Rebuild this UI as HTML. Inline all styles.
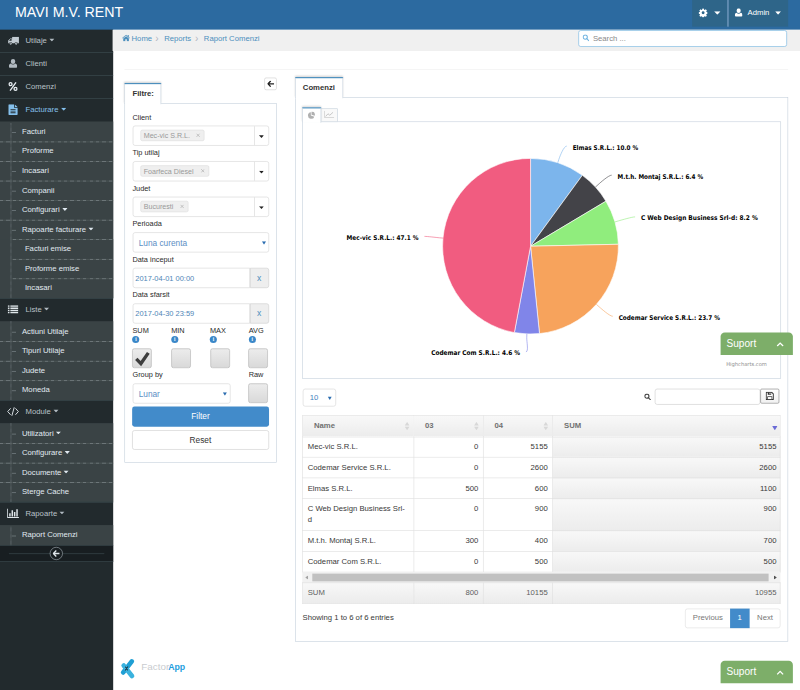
<!DOCTYPE html>
<html lang="ro">
<head>
<meta charset="utf-8">
<title>MAVI M.V. RENT - Raport Comenzi</title>
<style>
*{box-sizing:border-box;margin:0;padding:0}
html,body{width:800px;height:690px;overflow:hidden;background:#fff}
body{font-family:"Liberation Sans",Arial,sans-serif;font-size:13px;color:#393939;line-height:1.5}
#page{position:absolute;left:0;top:0;width:1350px;height:1165px;transform:scale(0.592593);transform-origin:0 0;background:#fff;overflow:hidden}
.abs{position:absolute}
svg{display:block}
/* navbar */
#navbar{position:absolute;left:0;top:0;width:1350px;height:50px;background:#2c6aa0;z-index:5}
#brand{position:absolute;left:25.3px;top:5px;font-size:24px;line-height:30px;color:#fff;white-space:nowrap}
.navbtn{position:absolute;top:0;height:45px;background:#2e6589;color:#fff}
/* sidebar */
#sidebar{position:absolute;left:0;top:48px;padding-top:2px;width:190.5px;height:1118px;background:#222a2d}
#sidebar ul{list-style:none}
.nl>li{border-top:1px solid #3f4e54;position:relative}
.nl>li:first-child{border-top:0}
.nl>li>a{display:block;height:38px;line-height:35px;color:#bac2c8;font-size:13px;position:relative;padding-left:43px;white-space:nowrap}
.nl>li>a .mi{position:absolute;left:7px;top:-1.5px;width:30px;height:38px}

.nl>li.open>a{color:#85c0ec}
.sub{background:#3a4345;position:relative}
.sub>li{position:relative}
.sub>li>a{display:block;height:33px;line-height:30.5px;border-top:1px solid transparent;background:repeating-linear-gradient(90deg,#8e989b 0,#8e989b 1px,#56605f 1px,#56605f 2px) 0 0/100% 1px no-repeat border-box;color:#e1eaf1;padding-left:37px;white-space:nowrap;position:relative}
.sub>li:first-child>a{border-top:0;height:34px;line-height:33px;background:none}
.sub>li>a:before{content:"";position:absolute;left:20px;top:16px;width:7px;border-top:1px solid #858f93}
.sub>li:first-child>a:before{top:18px}
.sub:before{content:"";position:absolute;left:18px;top:0;bottom:0;border-left:1px dotted #9aa4a8;z-index:2}
.sub .sub{border-top:0;background:#3a4345}
.sub .sub:before{display:none}
.sub .sub>li>a,.sub .sub>li:first-child>a{border-top:1px solid transparent;background:repeating-linear-gradient(90deg,#8e989b 0,#8e989b 1px,#56605f 1px,#56605f 2px) 0 0/100% 1px no-repeat border-box;height:33px;line-height:30.5px;margin-left:20px}
.sub .sub>li>a{padding-left:22px}
.sub .sub>li>a:before{display:none}
.caret{display:inline-block;vertical-align:middle;margin-left:4px;position:relative;top:-1px}
#toggle{height:28px;background:#181e21;border-top:1px solid #3f4e54;border-bottom:1px solid #3f4e54;position:relative}
#toggle:before{content:"";position:absolute;left:15px;right:15px;top:12.5px;border-top:1px solid #3f4e54}
#toggle .circ{position:absolute;left:84px;top:2px;width:22px;height:22px;border-radius:50%;border:1px solid #aab4bb;background:#181e21}
/* breadcrumbs */
#crumbs{position:absolute;left:190px;top:50px;width:1160px;height:36px;background:#f0f0f0}
#crumbs .bc{position:absolute;left:0;top:-0.5px;line-height:30px;font-size:13px;color:#4c8fbd;white-space:nowrap}
#crumbs .bc span{position:absolute;top:0}
#search{position:absolute;left:785.5px;top:0.5px;width:352px;height:28px;border:1px solid #6fb3e0;border-radius:4px;background:#fff;font-size:13px;color:#8a8a8a;line-height:26px;padding-left:24px}
/* generic */
.lbl{position:absolute;font-size:12.4px;color:#2a2a2a;margin-top:1.5px;line-height:18px;white-space:nowrap}
.box{position:absolute;border:1px solid #d5d5d5;background:#fff;border-radius:4px}
.tabpanel{position:absolute;border:1px solid #c5d0dc;background:#fff}
.tab{position:absolute;border:1px solid #c5d0dc;border-top:2px solid #4c8fbd;border-bottom:0;background:#fff;font-weight:bold;color:#333;font-size:13px;line-height:18px;white-space:nowrap;box-shadow:0 -2px 3px 0 rgba(0,0,0,.15)}
.blue{color:#4c8fbd}
.chk{position:absolute;width:33px;height:33px;border:1px solid #a8a8a8;border-radius:3.5px;background:linear-gradient(#ececec,#d9d9d9)}
.info{position:absolute;width:12px;height:12px;border-radius:50%;background:#3a87c8}
.info{text-align:center;color:#fff;font:bold 8.5px/12px "Liberation Serif",serif}
/* table */
.tbl{position:absolute;border-collapse:collapse;font-size:13px;color:#393939;table-layout:fixed}
.tbl th,.tbl td{border:1px solid #ddd;padding:7.5px 8px 0;line-height:18.5px;vertical-align:top}
.tbl td:last-child{padding-right:6px}
.tbl th{height:36px;padding-top:7.5px;background:linear-gradient(#f8f8f8,#ececec);color:#707070;font-weight:bold;text-align:left;padding-left:18.5px;position:relative}
.tbl td.n{text-align:right}
.tbl td.s{text-align:right;background:linear-gradient(#f8f8f8,#ececec)}
.tbl th .so{position:absolute;right:7px;top:10.5px}
.tbl.ft td{background:linear-gradient(#f8f8f8,#ececec);color:#5f5f5f}
.sup{position:absolute;left:1216px;width:122px;height:38px;background:#7dae69;border-radius:7px 7px 0 0;color:#fff;font-size:17px;line-height:37px;padding-left:10px;white-space:nowrap}
</style>
</head>
<body>
<div id="page">
<div id="navbar">
  <div id="brand">MAVI M.V. RENT</div>
  <div class="navbtn" style="left:1168px;width:59px">
    <svg class="abs" style="left:10.5px;top:14px" width="15" height="15" viewBox="0 0 16 16"><path fill="#fff" fill-rule="evenodd" d="M6.6 0.4h2.8l.4 2.1 1.2.5 1.8-1.2 2 2-1.2 1.8.5 1.2 2.1.4v2.8l-2.1.4-.5 1.2 1.2 1.8-2 2-1.8-1.2-1.2.5-.4 2.1H6.6l-.4-2.1-1.2-.5-1.8 1.2-2-2 1.200-1.8-.5-1.2-2.100-.4V7.200l2.100-.4.5-1.2-1.200-1.8 2-2 1.800 1.200 1.200-.5zM8 5.400a2.600 2.600 0 1 0 0 5.200a2.600 2.600 0 0 0 0-5.200z"/></svg>
    <svg class="abs" style="left:37px;top:19px" width="11" height="6" viewBox="0 0 11 6"><path d="M0 0h11L5.500 6z" fill="#fff"/></svg>
  </div>
  <div class="abs" style="left:1227.7px;top:0;width:1px;height:45px;background:#ddd"></div>
  <div class="navbtn" style="left:1229.500px;width:100.500px">
    <svg class="abs" style="left:10.5px;top:13.5px" width="13" height="14.5" viewBox="0 0 13 14" preserveAspectRatio="none"><path fill="#fff" d="M6.500 0a3.400 3.400 0 0 1 3.400 3.400v1a3.400 3.400 0 0 1-6.800 0v-1A3.400 3.400 0 0 1 6.500 0zM2.800 7.300c1 .9 2.300 1.400 3.700 1.400s2.700-.5 3.700-1.400c1.900.5 2.800 2.200 2.800 4.500 0 1.300-.9 2.200-2.100 2.200H2.100C.9 14 0 13.100 0 11.800c0-2.300.9-4 2.800-4.500z"/></svg>
    <span class="abs" style="left:32px;top:11px;line-height:20px;font-size:13px">Admin</span>
    <svg class="abs" style="left:78px;top:19px" width="10" height="6" viewBox="0 0 10 6"><path d="M0 0h10L5 6z" fill="#fff"/></svg>
  </div>
</div>
<div id="sidebar">
<ul class="nl">
  <li class="first"><a><span class="mi"><svg class="abs" style="left:6px;top:13px" width="19" height="14" viewBox="0 0 19 14"><path fill="#c3ccd3" d="M7.5 0H19v10.900H7.500zM7.500 2.800H4.300L0.800 6.300v4.600h6.700z"/><path fill="#222a2d" d="M4.700 4h1.800v2.700H2.100z"/><circle cx="5" cy="11.500" r="2.700" fill="#222a2d"/><circle cx="14.300" cy="11.500" r="2.700" fill="#222a2d"/><circle cx="5" cy="11.500" r="1.900" fill="#c3ccd3"/><circle cx="14.300" cy="11.500" r="1.900" fill="#c3ccd3"/><circle cx="5" cy="11.500" r="0.700" fill="#222a2d"/><circle cx="14.300" cy="11.500" r="0.700" fill="#222a2d"/></svg></span>Utilaje<svg class="caret" width="9" height="5" viewBox="0 0 9 5"><path d="M0 0h9L4.500 5z" fill="#b1bac1"/></svg></a></li>
  <li><a><span class="mi"><svg class="abs" style="left:8px;top:11px" width="14" height="16" viewBox="0 0 13 14"><path fill="#b1bac1" d="M6.500 0a3.400 3.400 0 0 1 3.400 3.400v1a3.400 3.400 0 0 1-6.800 0v-1A3.400 3.400 0 0 1 6.500 0zM2.800 7.300c1 .9 2.300 1.400 3.700 1.400s2.700-.5 3.700-1.400c1.900.5 2.800 2.200 2.800 4.500 0 1.300-.9 2.200-2.100 2.200H2.100C.9 14 0 13.100 0 11.800c0-2.300.9-4 2.800-4.500z"/></svg></span>Clienti</a></li>
  <li><a><span class="mi"><svg class="abs" style="left:7px;top:11px" width="16" height="16" viewBox="0 0 16 16"><g fill="none" stroke="#e8eef2" stroke-width="2.300"><circle cx="3.800" cy="4" r="2.500"/><circle cx="12.200" cy="12" r="2.500"/><path d="M13 1L3 15"/></g></svg></span>Comenzi</a></li>
  <li class="open"><a><span class="mi"><svg class="abs" style="left:7px;top:10px" width="16" height="18" viewBox="0 0 15 18" preserveAspectRatio="none"><path fill="#85c0ec" fill-rule="evenodd" d="M1 0h8v5c0 .6.400 1 1 1h5v11c0 .600-.4 1-1 1H1c-.6 0-1-.4-1-1V1c0-.6.400-1 1-1zM10.300 0.200L14.800 4.700H10.300zM3.500 8v1.300h8V8zM3.500 10.800v1.300h8v-1.300zM3.500 13.600v1.300h8v-1.300z"/></svg></span>Facturare<svg class="caret" width="9" height="5" viewBox="0 0 9 5"><path d="M0 0h9L4.500 5z" fill="#85c0ec"/></svg></a>
    <ul class="sub">
      <li><a>Facturi</a></li>
      <li><a>Proforme</a></li>
      <li><a>Incasari</a></li>
      <li><a>Companii</a></li>
      <li><a>Configurari<svg class="caret" width="9" height="5" viewBox="0 0 9 5"><path d="M0 0h9L4.500 5z" fill="#e1eaf1"/></svg></a></li>
      <li><a>Rapoarte facturare<svg class="caret" width="9" height="5" viewBox="0 0 9 5"><path d="M0 0h9L4.500 5z" fill="#e1eaf1"/></svg></a>
        <ul class="sub">
          <li><a>Facturi emise</a></li>
          <li><a>Proforme emise</a></li>
          <li><a>Incasari</a></li>
        </ul>
      </li>
    </ul>
  </li>
  <li><a><span class="mi"><svg class="abs" style="left:6px;top:12px" width="18" height="14" viewBox="0 0 18 14"><path fill="#dfe6ea" d="M0 0h3v2.500H0zM4.500 0H18v2.500H4.500zM0 3.800h3v2.500H0zM4.500 3.800H18v2.500H4.500zM0 7.600h3v2.500H0zM4.500 7.600H18v2.500H4.500zM0 11.400h3v2.500H0zM4.500 11.400H18v2.500H4.500z"/></svg></span>Liste<svg class="caret" width="9" height="5" viewBox="0 0 9 5"><path d="M0 0h9L4.500 5z" fill="#b1bac1"/></svg></a>
    <ul class="sub">
      <li><a>Actiuni Utilaje</a></li>
      <li><a>Tipuri Utilaje</a></li>
      <li><a>Judete</a></li>
      <li><a>Moneda</a></li>
    </ul>
  </li>
  <li><a><span class="mi"><svg class="abs" style="left:5px;top:12px" width="20" height="15" viewBox="0 0 20 15"><g fill="none" stroke="#dfe6ea" stroke-width="1.600" stroke-linecap="round" stroke-linejoin="round"><path d="M5.500 2.500L1 7.500l4.500 5M14.500 2.500l4.500 5-4.500 5M11.800 1L8.200 14"/></g></svg></span>Module<svg class="caret" width="9" height="5" viewBox="0 0 9 5"><path d="M0 0h9L4.500 5z" fill="#b1bac1"/></svg></a>
    <ul class="sub">
      <li><a>Utilizatori<svg class="caret" width="9" height="5" viewBox="0 0 9 5"><path d="M0 0h9L4.500 5z" fill="#e1eaf1"/></svg></a></li>
      <li><a>Configurare<svg class="caret" width="9" height="5" viewBox="0 0 9 5"><path d="M0 0h9L4.500 5z" fill="#e1eaf1"/></svg></a></li>
      <li><a>Documente<svg class="caret" width="9" height="5" viewBox="0 0 9 5"><path d="M0 0h9L4.500 5z" fill="#e1eaf1"/></svg></a></li>
      <li><a>Sterge Cache</a></li>
    </ul>
  </li>
  <li><a><span class="mi"><svg class="abs" style="left:5px;top:11px" width="20" height="16" viewBox="0 0 20 16"><path fill="#dfe6ea" d="M0 0h1.500v14.500H20V16H0zM3.500 8h2.500v5.500H3.500zM7.500 3h2.500v10.500H7.500zM11.500 6h2.500v7.500h-2.500zM15.500 1.500H18v12h-2.500z"/></svg></span>Rapoarte<svg class="caret" width="9" height="5" viewBox="0 0 9 5"><path d="M0 0h9L4.500 5z" fill="#b1bac1"/></svg></a>
    <ul class="sub">
      <li><a>Raport Comenzi</a></li>
    </ul>
  </li>
</ul>
<div id="toggle"><div class="circ"><svg class="abs" style="left:4px;top:4px" width="12" height="12" viewBox="0 0 12 12"><path d="M6 1L1 6l5 5M1.500 6H11.500" fill="none" stroke="#dfe6ea" stroke-width="2.200"/></svg></div></div>
</div>
<div id="crumbs">
  <div class="bc">
    <svg class="abs" style="left:15.5px;top:8.5px" width="13.5" height="11.5" viewBox="0 0 14 12"><path fill="#4c8fbd" d="M7 0.500L0 6.300l.8.900L7 2.100l6.200 5.100.8-.9-2.300-1.900V1.200H10v1.800zM2 7.200V12h3.700V8.500h2.600V12H12V7.200L7 3.100z"/></svg>
    <span style="left:32px">Home</span>
    <span style="left:72px;color:#b2b6bf;font-size:17px;top:1.5px">&#8250;</span>
    <span style="left:87px">Reports</span>
    <span style="left:139px;color:#b2b6bf;font-size:17px;top:1.5px">&#8250;</span>
    <span style="left:154px">Raport Comenzi</span>
  </div>
  <div id="search">Search ...
    <svg class="abs" style="left:6px;top:6.5px" width="11.5" height="11.5" viewBox="0 0 12 12"><g fill="none" stroke="#6fb3e0" stroke-width="1.800"><circle cx="4.800" cy="4.800" r="3.700"/><path d="M7.500 7.500L11.300 11.300" stroke-linecap="round"/></g></svg>
  </div>
</div>
<div class="abs" style="left:210px;top:116.5px;width:1120px;border-top:1px solid #eeeeee"></div>
<div class="abs" style="left:446px;top:130.500px;width:21px;height:21px;border:1px solid #ccc;border-radius:3px;background:#fff"><svg class="abs" style="left:4px;top:4px" width="12" height="11" viewBox="0 0 12 11"><path d="M5.800 0.800L1.300 5.500l4.500 4.700M1.500 5.500H11.500" fill="none" stroke="#222" stroke-width="2.300"/></svg></div>
<div class="tabpanel" style="left:210px;top:174px;width:257px;height:607px"></div>
<div class="tab" style="left:210px;top:140px;width:62px;height:36px;padding:6.5px 0 0 12.5px">Filtre:</div>
<div class="lbl" style="left:223.5px;top:187.5px;line-height:19.500px">Client</div>
<div class="box" style="left:224px;top:212px;width:229.500px;height:34px"><div class="abs" style="left:11.5px;top:5.5px;height:19px;width:108.5px;border:1px solid #dcdcdc;border-radius:3px;background:#efefef;color:#999;font-size:12px;line-height:18px;padding-left:5px;white-space:nowrap">Mec-vic S.R.L.<svg class="abs" style="right:6.5px;top:5.5px" width="6.5" height="6.5" viewBox="0 0 7 7"><path d="M0.500 0.500l6 6M6.500 0.500l-6 6" stroke="#b0b0b0" stroke-width="1.300" fill="none"/></svg></div><div class="abs" style="left:203.5px;top:0;width:1px;height:32px;background:#d5d5d5"></div><svg class="abs" style="left:211.5px;top:14.5px" width="8.5" height="5" viewBox="0 0 9 5"><path d="M0 0h9L4.500 5z" fill="#222"/></svg></div>
<div class="lbl" style="left:223.5px;top:247.5px;line-height:19.500px">Tip utilaj</div>
<div class="box" style="left:224px;top:272px;width:229.500px;height:34px"><div class="abs" style="left:11.5px;top:5.5px;height:19px;width:116px;border:1px solid #dcdcdc;border-radius:3px;background:#efefef;color:#999;font-size:12px;line-height:18px;padding-left:5px;white-space:nowrap">Foarfeca Diesel<svg class="abs" style="right:6.5px;top:5.5px" width="6.5" height="6.5" viewBox="0 0 7 7"><path d="M0.500 0.500l6 6M6.500 0.500l-6 6" stroke="#b0b0b0" stroke-width="1.300" fill="none"/></svg></div><div class="abs" style="left:203.5px;top:0;width:1px;height:32px;background:#d5d5d5"></div><svg class="abs" style="left:211.5px;top:14.5px" width="8.5" height="5" viewBox="0 0 9 5"><path d="M0 0h9L4.500 5z" fill="#222"/></svg></div>
<div class="lbl" style="left:223.5px;top:307.5px;line-height:19.500px">Judet</div>
<div class="box" style="left:224px;top:332px;width:229.500px;height:34px"><div class="abs" style="left:11.5px;top:5.5px;height:19px;width:81.5px;border:1px solid #dcdcdc;border-radius:3px;background:#efefef;color:#999;font-size:12px;line-height:18px;padding-left:5px;white-space:nowrap">Bucuresti<svg class="abs" style="right:6.5px;top:5.5px" width="6.5" height="6.5" viewBox="0 0 7 7"><path d="M0.500 0.500l6 6M6.500 0.500l-6 6" stroke="#b0b0b0" stroke-width="1.300" fill="none"/></svg></div><div class="abs" style="left:203.5px;top:0;width:1px;height:32px;background:#d5d5d5"></div><svg class="abs" style="left:211.5px;top:14.5px" width="8.5" height="5" viewBox="0 0 9 5"><path d="M0 0h9L4.500 5z" fill="#222"/></svg></div>
<div class="lbl" style="left:223.5px;top:367.5px;line-height:19.500px">Perioada</div>
<div class="box" style="left:224px;top:392px;width:229.500px;height:34px;font-size:14px;line-height:34px;padding-left:9px;color:#5b8ec4">Luna curenta<svg class="abs" style="left:217px;top:14px" width="7" height="6" viewBox="0 0 7 6"><path d="M0 0h7L3.500 6z" fill="#2b6db0"/></svg></div>
<div class="lbl" style="left:223.5px;top:427.5px;line-height:19.500px">Data inceput</div>
<div class="box" style="left:224px;top:452px;width:198px;height:34px;border-radius:4px 0 0 4px;font-size:12.6px;line-height:34.5px;padding-left:3.3px;color:#4f86b7">2017-04-01 00:00</div>
<div class="box" style="left:421.5px;top:452px;width:32px;height:34px;border-radius:0 4px 4px 0;background:#eee;border-color:#ccc;font-size:14.5px;line-height:33px;text-align:center;color:#4c8fbd">x</div>
<div class="lbl" style="left:223.5px;top:487.5px;line-height:19.500px">Data sfarsit</div>
<div class="box" style="left:224px;top:512px;width:198px;height:34px;border-radius:4px 0 0 4px;font-size:12.6px;line-height:34.5px;padding-left:3.3px;color:#4f86b7">2017-04-30 23:59</div>
<div class="box" style="left:421.5px;top:512px;width:32px;height:34px;border-radius:0 4px 4px 0;background:#eee;border-color:#ccc;font-size:14.5px;line-height:33px;text-align:center;color:#4c8fbd">x</div>
<div class="lbl" style="left:223.5px;top:547.5px;line-height:19.500px">SUM</div>
<div class="info" style="left:223.3px;top:566.5px">i</div>
<div class="chk" style="left:223px;top:587.5px"><svg class="abs" style="left:0;top:0" width="33" height="33" viewBox="0 0 33 33"><path d="M6 16.5l7.800 8L26.300 6.500" fill="none" stroke="#3d3d3d" stroke-width="5.600"/></svg></div>
<div class="lbl" style="left:288.9px;top:547.5px;line-height:19.500px">MIN</div>
<div class="info" style="left:288.7px;top:566.5px">i</div>
<div class="chk" style="left:289px;top:587.5px"></div>
<div class="lbl" style="left:354.3px;top:547.5px;line-height:19.500px">MAX</div>
<div class="info" style="left:354.1px;top:566.5px">i</div>
<div class="chk" style="left:354.6px;top:587.5px"></div>
<div class="lbl" style="left:419.7px;top:547.5px;line-height:19.500px">AVG</div>
<div class="info" style="left:419.5px;top:566.5px">i</div>
<div class="chk" style="left:419.1px;top:587.5px"></div>
<div class="lbl" style="left:223.5px;top:622.5px;line-height:19.500px">Group by</div>
<div class="box" style="left:224px;top:647px;width:165px;height:34px;font-size:14px;line-height:34px;padding-left:9px;color:#5b8ec4">Lunar<svg class="abs" style="left:151px;top:14px" width="7" height="6" viewBox="0 0 7 6"><path d="M0 0h7L3.500 6z" fill="#2b6db0"/></svg></div>
<div class="lbl" style="left:419.7px;top:622.5px;line-height:19.500px">Raw</div>
<div class="chk" style="left:419.200px;top:647px"></div>
<div class="abs" style="left:223px;top:685.5px;width:230.5px;height:34px;border-radius:4px;background:#428bca;color:#fff;font-size:14px;line-height:33px;text-align:center">Filter</div>
<div class="abs" style="left:223px;top:725.5px;width:230.5px;height:33.5px;border-radius:4px;background:#fff;border:1px solid #ccc;color:#333;font-size:14px;line-height:31px;text-align:center">Reset</div>
<div class="tabpanel" style="left:497.5px;top:164px;width:832px;height:918.7px"></div>
<div class="tab" style="left:497.5px;top:130px;width:81px;height:36px;padding:7px 0 0 12.5px">Comenzi</div>
<div class="tabpanel" style="left:510px;top:204.5px;width:807.5px;height:434.5px"></div>
<div class="abs" style="left:540.5px;top:182.5px;width:29.5px;height:23px;border:1px solid #c5d0dc;background:#f9f9f9"><svg class="abs" style="left:5px;top:3.5px" width="17" height="12" viewBox="0 0 17 12"><path d="M0.5 0v11.5H17" fill="none" stroke="#c4c4c4" stroke-width="1.2"/><path d="M2.5 9.5l4-4.5 3 2.5L15 2.5" fill="none" stroke="#c4c4c4" stroke-width="1.6"/></svg></div>
<div class="abs" style="left:510px;top:181px;width:31.5px;height:26px;border:1px solid #c5d0dc;border-top:2px solid #4c8fbd;border-bottom:0;background:#fff;box-shadow:0 -2px 3px 0 rgba(0,0,0,.15)"><svg class="abs" style="left:7.5px;top:4.5px" width="13" height="13" viewBox="0 0 14 14"><path d="M6 1.5A6 6 0 1 0 12.3 9.5L6 7.5z" fill="#b0b0b0"/><path d="M7.2 0a6.2 6.2 0 0 1 6.2 6.2l-.3 1.900-5.900-1.900z" fill="#b0b0b0"/></svg></div>
<svg class="abs" style="left:0;top:0" width="1350" height="700" viewBox="0 0 1350 700">
<path d="M895.3 415.5L895.3 267.3A148.2 148.2 0 0 1 982.7 295.8Z" fill="#7cb5ec" stroke="#fff" stroke-width="1" stroke-linejoin="round"/>
<path d="M956.4 246.5C951.4 246.5 945.0 263.2 943.1 268.9L941.3 274.6" fill="none" stroke="#7cb5ec" stroke-width="1"/>
<path d="M895.3 415.5L982.7 295.8A148.2 148.2 0 0 1 1022.5 339.5Z" fill="#434348" stroke="#fff" stroke-width="1" stroke-linejoin="round"/>
<path d="M1032.2 295.6C1027.2 295.6 1013.7 307.6 1009.3 311.6L1004.8 315.7" fill="none" stroke="#434348" stroke-width="1"/>
<path d="M895.3 415.5L1022.5 339.5A148.2 148.2 0 0 1 1043.5 412.2Z" fill="#90ed7d" stroke="#fff" stroke-width="1" stroke-linejoin="round"/>
<path d="M1071.7 366.0C1066.7 366.0 1049.2 371.2 1043.5 372.8L1037.7 374.5" fill="none" stroke="#90ed7d" stroke-width="1"/>
<path d="M895.3 415.5L1043.5 412.2A148.2 148.2 0 0 1 910.4 562.9Z" fill="#f7a35c" stroke="#fff" stroke-width="1" stroke-linejoin="round"/>
<path d="M1034.0 533.7C1029.0 533.7 1015.4 521.5 1010.9 517.6L1006.4 513.6" fill="none" stroke="#f7a35c" stroke-width="1"/>
<path d="M895.3 415.5L910.4 562.9A148.2 148.2 0 0 1 868.0 561.2Z" fill="#8085e9" stroke="#fff" stroke-width="1" stroke-linejoin="round"/>
<path d="M887.5 593.7C892.5 593.7 888.6 575.6 888.9 569.6L889.1 563.6" fill="none" stroke="#8085e9" stroke-width="1"/>
<path d="M895.3 415.5L868.0 561.2A148.2 148.2 0 0 1 895.3 267.3Z" fill="#f15c80" stroke="#fff" stroke-width="1" stroke-linejoin="round"/>
<path d="M716.3 398.9C721.3 398.9 735.8 400.7 741.8 401.3L747.7 401.8" fill="none" stroke="#f15c80" stroke-width="1"/>
<g font-family="'DejaVu Sans Condensed','DejaVu Sans','Liberation Sans',sans-serif" font-stretch="condensed" font-weight="bold" font-size="11" fill="#000">
<text x="966.4" y="252.3" textLength="110.5" lengthAdjust="spacingAndGlyphs">Elmas S.R.L.: 10.0 %</text>
<text x="1042.2" y="301.4" textLength="144.3" lengthAdjust="spacingAndGlyphs">M.t.h. Montaj S.R.L.: 6.4 %</text>
<text x="1081.7" y="371.8" textLength="197" lengthAdjust="spacingAndGlyphs">C Web Design Business Srl-d: 8.2 %</text>
<text x="1044" y="539.5" textLength="171" lengthAdjust="spacingAndGlyphs">Codemar Service S.R.L.: 23.7 %</text>
<text x="727.7" y="599.5" textLength="149.8" lengthAdjust="spacingAndGlyphs">Codemar Com S.R.L.: 4.6 %</text>
<text x="584.9" y="404.7" textLength="121.4" lengthAdjust="spacingAndGlyphs">Mec-vic S.R.L.: 47.1 %</text>
</g>
<text x="1225.5" y="617" textLength="68.5" lengthAdjust="spacingAndGlyphs" font-family="'DejaVu Sans','Liberation Sans',sans-serif" font-size="9" fill="#909090">Highcharts.com</text>
</svg>
<div class="box" style="left:510.5px;top:655.5px;width:56.5px;height:30.5px;font-size:13px;line-height:28px;padding-left:11px;color:#3f7fbd">10<svg class="abs" style="left:41.5px;top:12px" width="7" height="6" viewBox="0 0 7 6"><path d="M0 0h7L3.5 6z" fill="#2b6db0"/></svg></div>
<svg class="abs" style="left:1087px;top:663.5px" width="11.5" height="11.5" viewBox="0 0 13 13"><g fill="none" stroke="#444" stroke-width="2.1"><circle cx="5.2" cy="5.2" r="3.9"/><path d="M8 8l4 4" stroke-linecap="round"/></g></svg>
<div class="box" style="left:1105px;top:655.5px;width:178px;height:27.5px;border-color:#ccc"></div>
<div class="abs" style="left:1283px;top:655.5px;width:31.5px;height:25.5px;border:1px solid #7c7c7c;border-radius:2.5px;background:linear-gradient(#fff,#f1f1f1)"><svg class="abs" style="left:8px;top:4.5px" width="14" height="14" viewBox="0 0 14 14"><path d="M1 1h9.3L13 3.7V13H1z" fill="#fff" stroke="#333" stroke-width="1.7" stroke-linejoin="round"/><rect x="3.6" y="1" width="5.8" height="4.2" fill="#333"/><rect x="6.6" y="1.8" width="1.6" height="2.4" fill="#fff"/><rect x="3.4" y="8.4" width="7.2" height="4.6" fill="#fff" stroke="#333" stroke-width="1.2"/></svg></div>
<table class="tbl" style="left:510.3px;top:700.7px;width:807px"><colgroup><col style="width:187.5px"><col style="width:117.3px"><col style="width:117.2px"><col></colgroup>
<thead><tr><th>Name<svg class="so" width="8" height="14" viewBox="0 0 8 14"><path d="M4 0l4 6H0zM4 14L0 8h8z" fill="#d8d8d8"/></svg></th><th>03<svg class="so" width="8" height="14" viewBox="0 0 8 14"><path d="M4 0l4 6H0zM4 14L0 8h8z" fill="#d8d8d8"/></svg></th><th>04<svg class="so" width="8" height="14" viewBox="0 0 8 14"><path d="M4 0l4 6H0zM4 14L0 8h8z" fill="#d8d8d8"/></svg></th><th>SUM<svg class="so" style="top:17px;right:4.5px" width="9" height="7" viewBox="0 0 9 7"><path d="M0 0h9L4.5 7z" fill="#6b6bd6"/></svg></th></tr></thead><tbody>
<tr style="height:34.8px"><td>Mec-vic S.R.L.</td><td class="n">0</td><td class="n">5155</td><td class="s">5155</td></tr>
<tr style="height:34.8px"><td>Codemar Service S.R.L.</td><td class="n">0</td><td class="n">2600</td><td class="s">2600</td></tr>
<tr style="height:34.8px"><td>Elmas S.R.L.</td><td class="n">500</td><td class="n">600</td><td class="s">1100</td></tr>
<tr style="height:54px"><td><div style="width:168px">C Web Design Business Srl-d</div></td><td class="n">0</td><td class="n">900</td><td class="s">900</td></tr>
<tr style="height:34.8px"><td>M.t.h. Montaj S.R.L.</td><td class="n">300</td><td class="n">400</td><td class="s">700</td></tr>
<tr style="height:34.8px"><td>Codemar Com S.R.L.</td><td class="n">0</td><td class="n">500</td><td class="s">500</td></tr>
</tbody></table>
<div class="abs" style="left:510.3px;top:965px;width:807px;height:18px;background:#f1f1f1"><div class="abs" style="left:17px;top:3px;width:770px;height:12.5px;background:#c1c1c1"></div><svg class="abs" style="left:5px;top:5.5px" width="5" height="7" viewBox="0 0 5 7"><path d="M5 0v7L0 3.5z" fill="#a3a3a3"/></svg><svg class="abs" style="left:796px;top:5.5px" width="5" height="7" viewBox="0 0 5 7"><path d="M0 0v7L5 3.5z" fill="#505050"/></svg></div>
<table class="tbl ft" style="left:510.3px;top:982.7px;width:807px"><colgroup><col style="width:187.5px"><col style="width:117.3px"><col style="width:117.2px"><col></colgroup><tbody><tr style="height:35.5px"><td>SUM</td><td class="n">800</td><td class="n">10155</td><td class="n">10955</td></tr></tbody></table>
<div class="lbl" style="left:510.5px;top:1030.5px;line-height:19.5px;font-size:13px;color:#393939">Showing 1 to 6 of 6 entries</div>
<div class="abs" style="left:1156px;top:1027px;width:161px;height:32.5px;border:1px solid #ddd;border-radius:4px;background:#fff;font-size:13px;line-height:30px;color:#777;white-space:nowrap"><span class="abs" style="left:0;top:0;width:75px;text-align:center">Previous</span><span class="abs" style="left:74.5px;top:-1px;width:33px;height:32.5px;line-height:32px;text-align:center;background:#428bca;color:#fff">1</span><span class="abs" style="left:108.5px;top:0;width:51px;text-align:center">Next</span></div>
<svg class="abs" style="left:202px;top:1105px" width="28" height="44" viewBox="0 0 28 44"><g stroke-linecap="round" fill="none"><path d="M20.4 11.1L5.900 29.700" stroke="#1f9fd4" stroke-width="8"/><path d="M6.800 18.200L20.700 35.700" stroke="#3ab2de" stroke-width="8"/><path d="M9.700 20.600l3.600 5M13.500 20.400l-4 5.400" stroke="#1d3a4c" stroke-width="1.700"/></g></svg>
<div class="abs" style="left:238.5px;top:1112px;font-size:16.6px;line-height:26px;white-space:nowrap;color:#c9cccf">Factor<b style="color:#1f9ede;font-size:14.800px;letter-spacing:-0.2px;margin-left:-1.5px">App</b></div>
<div class="sup" style="top:561px">Suport<svg class="abs" style="left:94px;top:16px" width="13" height="8" viewBox="0 0 13 8"><path d="M1.500 7l5-5 5 5" fill="none" stroke="#fff" stroke-width="2.200"/></svg></div>
<div class="sup" style="top:1114.500px">Suport<svg class="abs" style="left:94px;top:16px" width="13" height="8" viewBox="0 0 13 8"><path d="M1.500 7l5-5 5 5" fill="none" stroke="#fff" stroke-width="2.200"/></svg></div>

</div>
</body>
</html>
